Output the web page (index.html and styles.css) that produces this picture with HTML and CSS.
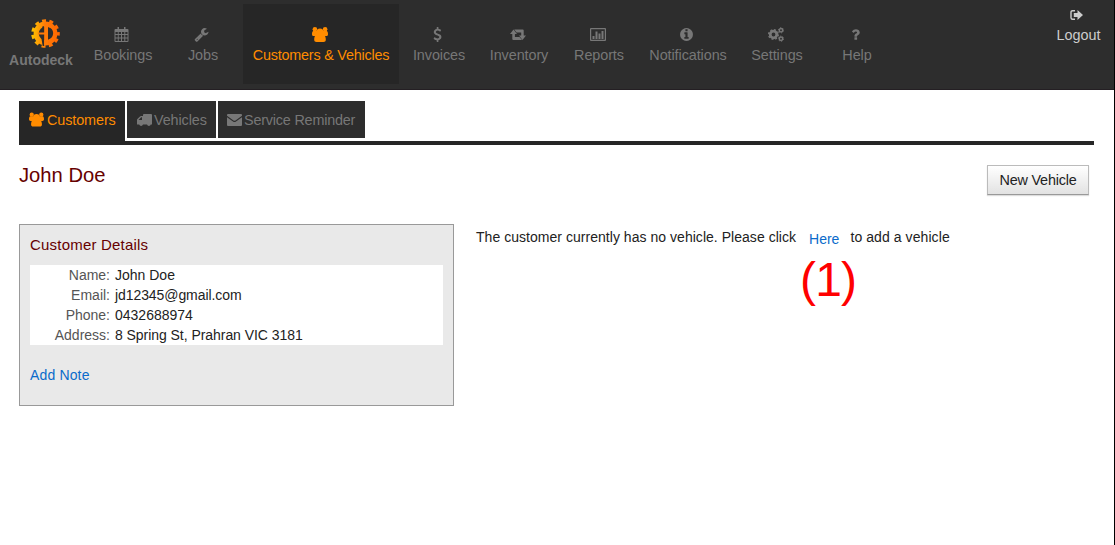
FILE: index.html
```html
<!DOCTYPE html>
<html lang="en">
<head>
<meta charset="utf-8">
<title>Autodeck</title>
<link rel="stylesheet" href="styles.css">
</head>
<body>
<svg class="sprite" aria-hidden="true">
  <symbol id="users" viewBox="0 0 16 15">
    <circle cx="2.900" cy="2.300" r="2.300"/><circle cx="13.100" cy="2.300" r="2.300"/><circle cx="8" cy="5" r="3.500"/>
    <path d="M1.200 4C.2 4.700 0 5.900 0 7.200 0 8.600.8 9 1.600 9h12.800c.8 0 1.600-.4 1.600-1.800 0-1.300-.2-2.500-1.200-3.200L11 4 8 5.500 5 4zM4.500 7.500C2.800 8.300 2.200 10.500 2.200 12.800c0 1.500.9 2.200 2.300 2.200h7c1.400 0 2.300-.7 2.300-2.200 0-2.300-.6-4.500-2.300-5.300z"/>
  </symbol>
</svg>
<div class="page">
  <header class="header">
    <div class="brand">
      <svg class="logo" viewBox="0 0 28 28">
        <defs><linearGradient id="flame" gradientUnits="userSpaceOnUse" x1="0" y1="14" x2="28" y2="14"><stop offset="0" stop-color="#ffc800"/><stop offset=".5" stop-color="#ff7a08"/><stop offset="1" stop-color="#ff6600"/></linearGradient></defs>
        <circle cx="14" cy="14" r="12.300" fill="none" stroke="url(#flame)" stroke-width="3" stroke-dasharray="3.800 3.226" stroke-dashoffset="1.900"/>
        <circle cx="14" cy="14" r="9" fill="none" stroke="url(#flame)" stroke-width="5"/>
        <path class="gear-cut" d="M11.200 7h1.500v5.500h-2.700zM9.500 15.500h3.200V26h-1.400z"/>
        <path d="M12.700 4h3.800v21h-3.800zM7 13h7v2H7z" fill="#ff7a08"/>
        <path class="gear-cut" d="M16.500 8c6.500.5 6.500 11 0 11.500z"/>
      </svg>
      <span class="brand-name">Autodeck</span>
    </div>
    <nav class="nav">
      <a class="nav-item"><svg class="icon" viewBox="0 0 14 15"><path fill-rule="evenodd" d="M3 0h1.500v2h5V0H11v2h2q1 0 1 1v11q0 1-1 1H1q-1 0-1-1V3q0-1 1-1h2zM1 5v2h2.300V5zm3.200 0v2h2.300V5zm3.300 0v2h2.300V5zm3.300 0v2H13V5zM1 8v2.500h2.300V8zm3.200 0v2.500h2.300V8zm3.300 0v2.500h2.300V8zm3.300 0v2.500H13V8zM1 11.500V14h2.300v-2.500zm3.200 0V14h2.300v-2.500zm3.300 0V14h2.300v-2.500zm3.300 0V14H13v-2.500z"/></svg><span>Bookings</span></a>
      <a class="nav-item"><svg class="icon" viewBox="0 0 1792 1792"><path d="M448 1472q0-26-19-45t-45-19-45 19-19 45 19 45 45 19 45-19 19-45zm644-420l-682 682q-37 37-90 37-52 0-91-37l-106-108q-38-36-38-90 0-53 38-91l681-681q39 98 114.500 173.500t173.500 114.500zm634-435q0 39-23 106-47 134-164.500 217.500t-258.500 83.500q-185 0-316.500-131.500t-131.500-316.500 131.500-316.500 316.500-131.500q58 0 121.500 16.500t107.500 46.500q16 11 16 28t-16 28l-293 169v224l193 107q5-3 79-48.500t135.500-81 70.500-35.500q15 0 23.500 10t8.500 25z"/></svg><span>Jobs</span></a>
      <a class="nav-item active"><svg class="icon wide"><use href="#users"/></svg><span>Customers &amp; Vehicles</span></a>
      <a class="nav-item"><svg class="icon" viewBox="0 0 1792 1792"><path d="M1362 1185q0 153-99.500 263.500t-258.500 136.500v175q0 14-9 23t-23 9h-135q-13 0-22.500-9.500t-9.500-22.500v-175q-66-9-127.500-31t-101.500-44.500-74-48-46.500-37.500-17.500-18q-17-21-2-41l103-135q7-10 23-12 15-2 24 9l2 2q113 99 243 125 37 8 74 8 81 0 142.500-43t61.500-122q0-28-15-53t-33.500-42-58.500-37.500-66-32-80-32.500q-39-16-61.500-25t-61.500-26.500-62.500-31-56.500-35.500-53.500-42.500-43.500-49-35.500-58-21-66.500-8.500-78q0-138 98-242t255-134v-180q0-13 9.500-22.500t22.500-9.500h135q14 0 23 9t9 23v176q57 6 110.500 23t87 33.500 63.500 37.500 39 29 15 14q17 18 5 38l-81 146q-8 15-23 16-14 3-27-7-3-3-14.500-12t-39-26.500-58.500-32-74.500-26-85.500-11.500q-95 0-155 43t-60 111q0 26 8.500 48t29.500 41.500 39.500 33 56 31 60.500 27 70 27.500q53 20 81 31.500t76 35 75.500 42.500 62 50 53 63.500 31.500 76.500 13 94z"/></svg><span>Invoices</span></a>
      <a class="nav-item"><svg class="icon wide" viewBox="0 0 16 15"><path d="M3.500 2.500L7 7H4.900v3h4.600l2.500 3H3.300q-1 0-1-1V7H0zM4.200 2.500h8.500q1 0 1 1V8.500H16L12.500 13 9 8.500h2.200v-3H6.600z"/></svg><span>Inventory</span></a>
      <a class="nav-item"><svg class="icon wide" viewBox="0 0 16 15"><path fill-rule="evenodd" d="M1 1h14q1 0 1 1v11q0 1-1 1H1q-1 0-1-1V2q0-1 1-1zm.2 1.200v10.600h13.600V2.200z"/><path d="M2.500 9h2v3h-2zM5.500 4.500h2V12h-2zM8.500 6.500h2V12h-2zM11.500 4h2v8h-2z"/></svg><span>Reports</span></a>
      <a class="nav-item notifications"><svg class="icon" viewBox="0 0 1792 1792"><path d="M1152 1376v-160q0-14-9-23t-23-9h-96v-512q0-14-9-23t-23-9h-320q-14 0-23 9t-9 23v160q0 14 9 23t23 9h96v320h-96q-14 0-23 9t-9 23v160q0 14 9 23t23 9h448q14 0 23-9t9-23zm-128-896v-192q0-14-9-23t-23-9h-192q-14 0-23 9t-9 23v192q0 14 9 23t23 9h192q14 0 23-9t9-23zm640 416q0 209-103 385.500t-279.500 279.500-385.500 103-385.500-103-279.500-279.500-103-385.500 103-385.500 279.500-279.500 385.500-103 385.500 103 279.500 279.500 103 385.500z"/></svg><span>Notifications</span></a>
      <a class="nav-item"><svg class="icon wide" viewBox="0 0 16 15"><g fill="none" stroke="currentColor"><circle cx="5.500" cy="7.500" r="3.300" stroke-width="2.800"/><circle cx="5.500" cy="7.500" r="4.900" stroke-width="1.300" stroke-dasharray="1.900 1.948"/><circle cx="13" cy="3.300" r="1.700" stroke-width="1.500"/><circle cx="13" cy="3.300" r="2.600" stroke-width=".9" stroke-dasharray="1.300 1.423"/><circle cx="13" cy="11.700" r="1.700" stroke-width="1.500"/><circle cx="13" cy="11.700" r="2.600" stroke-width=".9" stroke-dasharray="1.300 1.423"/></g></svg><span>Settings</span></a>
      <a class="nav-item"><svg class="icon" viewBox="0 0 1792 1792"><path d="M1088 1256v240q0 16-12 28t-28 12h-240q-16 0-28-12t-12-28v-240q0-16 12-28t28-12h240q16 0 28 12t12 28zm316-600q0 54-15.500 101t-35 76.500-55 59.500-57.500 43.500-61 35.500q-41 23-68.500 65t-27.500 67q0 17-12 32.500t-28 15.500h-240q-15 0-25.500-18.500t-10.500-37.500v-45q0-83 65-156.500t143-108.500q59-27 84-56t25-76q0-42-46.500-74t-107.500-32q-65 0-108 29-35 25-107 115-13 16-31 16-12 0-25-8l-164-125q-13-10-15.500-25t5.500-28q160-266 464-266 80 0 161 31t146 83 106 127.500 41 158.500z"/></svg><span>Help</span></a>
    </nav>
    <a class="logout"><svg class="logout-icon" viewBox="0 0 13 12"><path d="M5 1.700H2.500Q1 1.700 1 3.200v5.600q0 1.500 1.500 1.500H5" fill="none" stroke="currentColor" stroke-width="1.400"/><path d="M7.500 1L13 6l-5.500 5V8H3.800V4h3.700z"/></svg><span>Logout</span></a>
  </header>
  <main class="content">
    <div class="tabs">
      <a class="tab current"><svg class="tab-icon"><use href="#users"/></svg><span>Customers</span></a>
      <a class="tab vehicles"><svg class="tab-icon truck" viewBox="0 0 15 13"><path fill-rule="evenodd" d="M7 0h7q1 0 1 1v9.500h-1.200a2 2 0 0 1-3.800 0H6a2 2 0 0 1-3.800 0H0V6q0-.6.400-1L3 2.400Q3.400 2 4 2h2V1q0-1 1-1zM4.200 3.200L1.500 6H5V3.200z"/></svg><span>Vehicles</span></a>
      <a class="tab reminder"><svg class="tab-icon mail" viewBox="0 0 15 12"><path d="M1 0h13q1 0 1 1v.8L8.500 6.500q-1 .7-2 0L0 1.800V1q0-1 1-1zM0 3.200l6 4.300q1.500 1 3 0l6-4.300V11q0 1-1 1H1q-1 0-1-1z"/></svg><span>Service Reminder</span></a>
    </div>
    <div class="title-row">
      <h1 class="title">John Doe</h1>
      <button class="button">New Vehicle</button>
    </div>
    <div class="columns">
      <section class="card">
        <h2 class="card-title">Customer Details</h2>
        <dl class="details">
          <dt>Name:</dt><dd>John Doe</dd>
          <dt>Email:</dt><dd class="email">jd12345@gmail.com</dd>
          <dt>Phone:</dt><dd>0432688974</dd>
          <dt>Address:</dt><dd class="address">8 Spring St, Prahran VIC 3181</dd>
        </dl>
        <a class="note">Add Note</a>
      </section>
      <section class="empty">
        <p class="message"><span class="lead">The customer currently has no vehicle. Please click</span><a class="here">Here</a><span class="tail">to add a vehicle</span></p>
        <div class="callout">(1)</div>
      </section>
    </div>
  </main>
</div>
</body>
</html>
```
FILE: styles.css
```css
* { box-sizing: border-box; }
body { margin: 0; background: #fff; color: #222; font: 14px/20px "Liberation Sans", Arial, sans-serif; overflow: hidden; }
svg { fill: currentColor; flex: none; }
.sprite { display: none; }
.page { height: 545px; border-right: 1px solid #000; }
.header { display: flex; height: 90px; background: #2d2d2d; border-bottom: 1px solid #241f23; color: #777; }
.brand { width: 83px; padding: 19px 1px 0 0; display: flex; flex-direction: column; align-items: center; }
.logo { width: 29px; height: 29px; margin-left: 9px; }
.gear-cut { fill: #2d2d2d; }
.brand-name { font-weight: bold; line-height: 20px; margin-top: 2px; }
.nav { display: flex; flex: 1; padding-top: 4px; }
.nav-item { width: 80px; height: 80px; padding-top: 23px; display: flex; flex-direction: column; align-items: center; font-size: 14.400px; letter-spacing: -.08px; white-space: nowrap; }
.nav-item span { margin-top: 3px; line-height: 20px; }
.icon { width: 15px; height: 15px; margin-right: 3px; }
.wide { width: 16px; margin-right: 2px; }
.active { width: 156px; background: #262626; color: #ff8c00; letter-spacing: -.22px; }
.notifications { width: 98px; }
.logout { width: 71px; padding-top: 9px; color: #ccc; display: flex; flex-direction: column; align-items: center; font-size: 14.400px; }
.logout-icon { width: 13px; height: 12px; margin-right: 4px; }
.logout span { margin-top: 4px; }
.content { padding: 11px 20px 0 19px; }
.tabs { display: flex; gap: 2px; height: 44px; border-bottom: 4px solid #262626; }
.tab { height: 37px; padding-left: 10px; display: flex; align-items: center; gap: 3px; background: #2d2d2d; color: #777; font-size: 14.400px; letter-spacing: -.2px; white-space: nowrap; }
.current { width: 106px; height: 40px; padding-bottom: 3px; background: #262626; color: #ff8c00; letter-spacing: -.1px; }
.tab-icon { width: 15px; height: 15px; }
.vehicles { width: 89px; gap: 2px; letter-spacing: -.1px; }
.reminder { width: 147px; padding-left: 9px; gap: 2px; }
.truck { height: 13px; margin-top: 2px; }
.mail { height: 12px; }
.title-row { display: flex; justify-content: space-between; padding: 20px 5px 0 0; height: 79px; }
.title { margin: 0; font-size: 20.200px; line-height: 20px; font-weight: normal; color: #600; }
.button { width: 102px; height: 30px; padding: 0; border: 1px solid #bbb; border-bottom-color: #999; background: linear-gradient(#fff, #e2e2e2); color: #222; font: 14.400px "Liberation Sans", Arial, sans-serif; letter-spacing: -.2px; box-shadow: 0 1px 1px #ddd; }
.columns { display: flex; gap: 22px; }
.card { width: 435px; height: 182px; padding: 10px 10px; border: 1px solid #999; background: #e9e9e9; }
.card-title { margin: 0 0 10px; font-size: 15px; letter-spacing: .2px; line-height: 20px; font-weight: normal; color: #600; }
.details { margin: 0 0 20px; display: grid; grid-template-columns: 80px 1fr; column-gap: 5px; background: #fff; }
.details dt { text-align: right; color: #555; }
.details dd { margin: 0; }
.email { letter-spacing: -.08px; }
.address { letter-spacing: -.05px; }
.note, .here { color: #0b6bcb; letter-spacing: .15px; }
.message { display: flex; margin: 3px 0 0; white-space: nowrap; }
.lead { letter-spacing: .035px; }
.here { margin: 2px 11px 0 13px; letter-spacing: 0; }
.tail { letter-spacing: .08px; }
.callout { margin: 6px 0 0 324px; color: #f00; font-size: 48px; line-height: 50px; letter-spacing: -.8px; }
```
